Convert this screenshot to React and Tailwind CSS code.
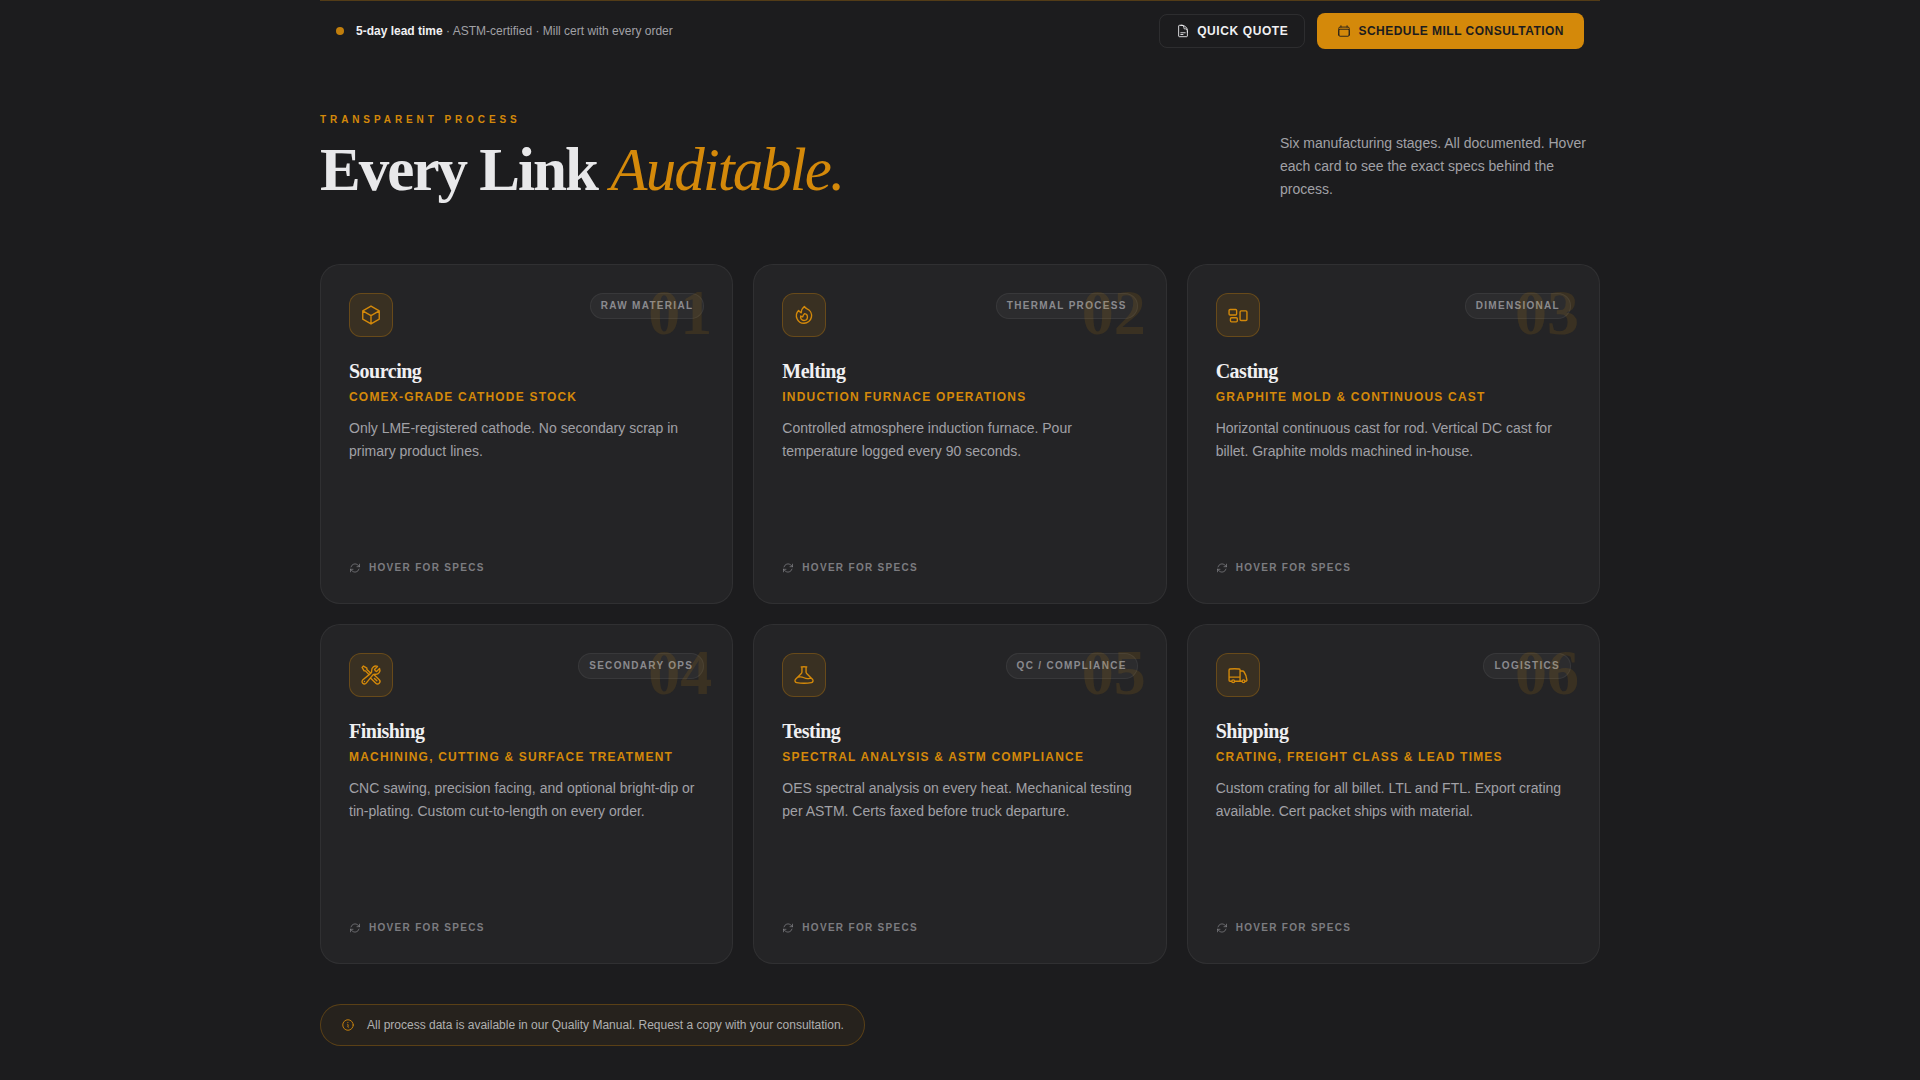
import React from 'react';
import {
  HiOutlineArrowPath,
  HiOutlineBeaker,
  HiOutlineCalendar,
  HiOutlineCube,
  HiOutlineDocumentText,
  HiOutlineFire,
  HiOutlineInformationCircle,
  HiOutlineRectangleGroup,
  HiOutlineTruck,
  HiOutlineWrenchScrewdriver,
} from 'react-icons/hi2';

const STAGES = [
  {
    number: '01',
    icon: HiOutlineCube,
    tag: 'Raw Material',
    title: 'Sourcing',
    subtitle: 'COMEX-Grade Cathode Stock',
    text: 'Only LME-registered cathode. No secondary scrap in primary product lines.',
  },
  {
    number: '02',
    icon: HiOutlineFire,
    tag: 'Thermal Process',
    title: 'Melting',
    subtitle: 'Induction Furnace Operations',
    text: 'Controlled atmosphere induction furnace. Pour temperature logged every 90 seconds.',
  },
  {
    number: '03',
    icon: HiOutlineRectangleGroup,
    tag: 'Dimensional',
    title: 'Casting',
    subtitle: 'Graphite Mold & Continuous Cast',
    text: 'Horizontal continuous cast for rod. Vertical DC cast for billet. Graphite molds machined in-house.',
  },
  {
    number: '04',
    icon: HiOutlineWrenchScrewdriver,
    tag: 'Secondary Ops',
    title: 'Finishing',
    subtitle: 'Machining, Cutting & Surface Treatment',
    text: 'CNC sawing, precision facing, and optional bright-dip or tin-plating. Custom cut-to-length on every order.',
  },
  {
    number: '05',
    icon: HiOutlineBeaker,
    tag: 'QC / Compliance',
    title: 'Testing',
    subtitle: 'Spectral Analysis & ASTM Compliance',
    text: 'OES spectral analysis on every heat. Mechanical testing per ASTM. Certs faxed before truck departure.',
  },
  {
    number: '06',
    icon: HiOutlineTruck,
    tag: 'Logistics',
    title: 'Shipping',
    subtitle: 'Crating, Freight Class & Lead Times',
    text: 'Custom crating for all billet. LTL and FTL. Export crating available. Cert packet ships with material.',
  },
];

function TopBar() {
  return (
    <div className="flex flex-wrap items-center justify-between gap-3 border-t border-[#d4890a]/30 px-4 py-3">
      <div className="flex items-center gap-3">
        <span className="size-2 rounded-full bg-[#d4890a]/90" />
        <p className="text-xs text-[#a1a1a6]">
          <strong className="font-bold text-[#f0f0f2]">5-day lead time</strong> · ASTM-certified · Mill cert with every order
        </p>
      </div>
      <div className="flex items-center gap-3">
        <button
          type="button"
          className="flex h-[34px] cursor-pointer items-center gap-[7px] rounded-lg border border-white/8 px-4 text-xs font-bold tracking-[0.05em] text-[#f0f0f2] uppercase hover:border-white/20"
        >
          <HiOutlineDocumentText className="size-3.5" />
          Quick Quote
        </button>
        <button
          type="button"
          className="flex h-9 cursor-pointer items-center gap-[7px] rounded-lg bg-[#d4890a] px-5 text-xs font-bold tracking-[0.04em] text-[#1c1c1e] uppercase hover:bg-[#e0971a]"
        >
          <HiOutlineCalendar className="size-3.5" />
          Schedule Mill Consultation
        </button>
      </div>
    </div>
  );
}

function StageCard({ stage }) {
  const Icon = stage.icon;

  return (
    <article className="relative flex min-h-[340px] flex-col rounded-[20px] border border-white/6 bg-[#242426] p-7">
      <div className="mb-5 flex items-start justify-between">
        <div className="flex size-11 items-center justify-center rounded-xl border border-[#d4890a]/30 bg-[#d4890a]/12 text-[#d4890a]">
          <Icon className="size-[22px]" />
        </div>
        <span className="rounded-full border border-white/6 bg-white/4 px-2.5 py-[3px] text-[10px] leading-[18px] font-bold tracking-[0.13em] text-[#8a8a8e] uppercase">
          {stage.tag}
        </span>
      </div>

      <span
        aria-hidden="true"
        className="pointer-events-none absolute top-4 right-5 font-['Liberation_Serif',serif] text-[64px] leading-none font-bold text-[#d4890a]/13 select-none"
      >
        {stage.number}
      </span>

      <h3 className="font-['Liberation_Serif',serif] text-xl leading-7 font-bold tracking-tight text-[#f0f0f2]">
        {stage.title}
      </h3>
      <p className="mt-1 text-xs leading-4 font-bold tracking-[0.1em] text-[#d4890a] uppercase">{stage.subtitle}</p>
      <p className="mt-3 text-sm leading-[23px] text-[#a1a1a6]">{stage.text}</p>

      <div className="mt-auto flex items-center gap-2 text-[10px] leading-[14px] font-bold tracking-[0.13em] text-[#7c7c80] uppercase">
        <HiOutlineArrowPath className="size-3" />
        Hover for specs
      </div>
    </article>
  );
}

export default function App() {
  return (
    <div className="min-h-screen bg-[#1c1c1e] font-['Liberation_Sans',sans-serif]">
      <main className="mx-auto max-w-7xl">
        <TopBar />

        <section className="pt-[49px] pb-8">
          <header className="mb-[63px] flex flex-wrap items-end justify-between gap-6">
            <div>
              <p className="mb-2 text-[10px] leading-5 font-bold tracking-[0.39em] text-[#d4890a] uppercase">
                Transparent Process
              </p>
              <h2 className="font-['Liberation_Serif',serif] text-[61px] leading-[63px] font-bold tracking-[-0.032em] text-[#e8e8ea]">
                Every Link <em className="font-normal text-[#d4890a]">Auditable.</em>
              </h2>
            </div>
            <p className="max-w-80 text-sm leading-[23px] text-[#a1a1a6]">
              Six manufacturing stages. All documented. Hover each card to see the exact specs behind the process.
            </p>
          </header>

          <div className="grid grid-cols-1 gap-5 md:grid-cols-2 lg:grid-cols-3">
            {STAGES.map(stage => (
              <StageCard key={stage.number} stage={stage} />
            ))}
          </div>

          <div className="mt-10 inline-flex items-center gap-3 rounded-full border border-[#d4890a]/30 bg-[#d4890a]/6 px-5 py-3 text-xs text-[#b0b0b0]">
            <HiOutlineInformationCircle className="size-3.5 shrink-0 text-[#d4890a]" />
            All process data is available in our Quality Manual. Request a copy with your consultation.
          </div>
        </section>
      </main>
    </div>
  );
}
